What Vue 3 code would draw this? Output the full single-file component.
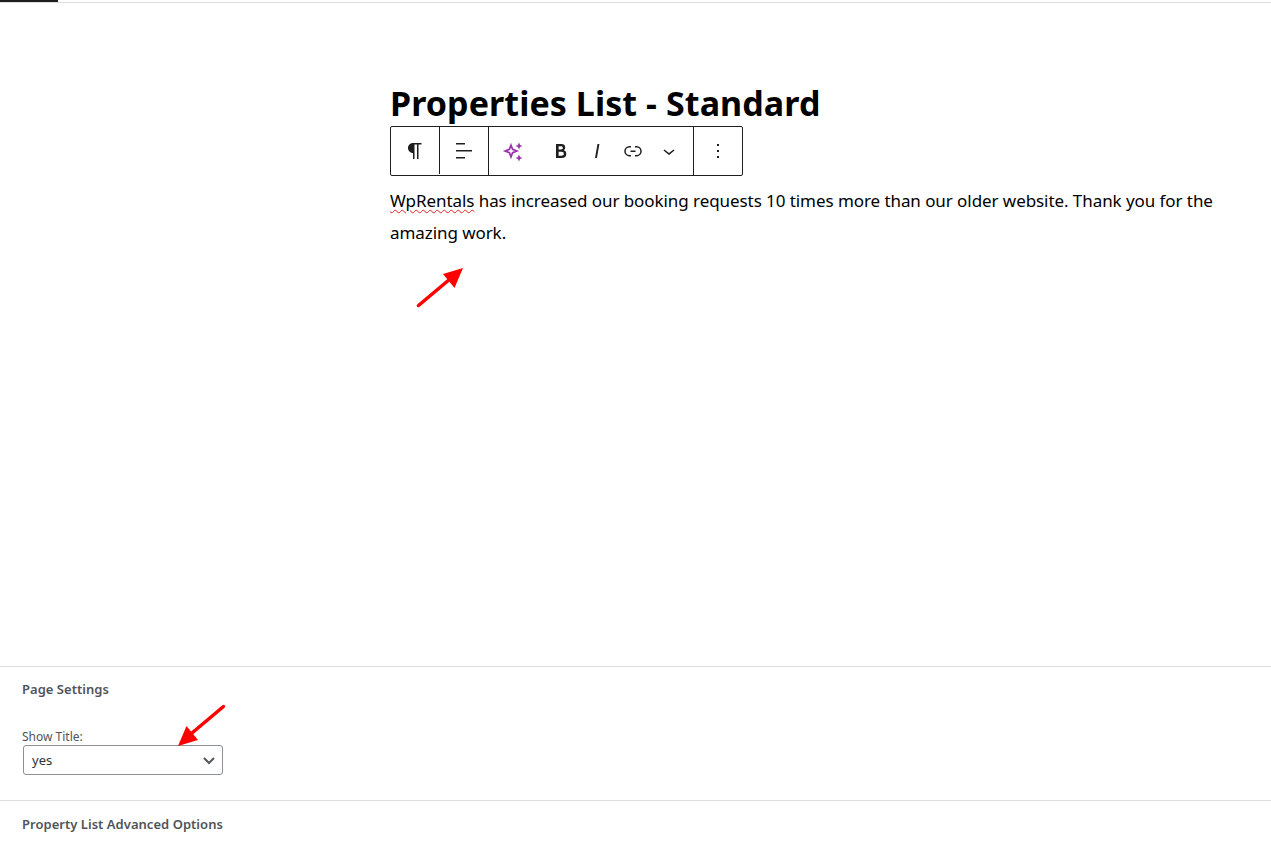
<template>
	<div class="page">
		<div class="progress"><div class="progress-done"></div></div>

		<main class="editor">
			<h1 class="title">Properties List - Standard</h1>

			<div class="toolbar">
				<div class="group">
					<button class="tool wide"><svg viewBox="0 0 24 24"><path d="m9.99609 14v-.2251l.00391.0001v6.225h1.5v-14.5h2.5v14.5h1.5v-14.5h3v-1.5h-8.50391c-2.76142 0-5 2.23858-5 5 0 2.7614 2.23858 5 5 5z" /></svg></button>
				</div>
				<div class="group">
					<button class="tool wide"><svg viewBox="0 0 24 24"><path d="M13 5.5H4V4h9v1.5Zm7 7H4V11h16v1.5Zm-7 7H4V18h9v1.5Z" /></svg></button>
				</div>
				<div class="group formats">
					<button class="tool ai"><svg viewBox="0 0 24 24"><path class="spark" d="M10 6.2 11.6 10.4 15.8 12 11.6 13.6 10 17.8 8.4 13.6 4.2 12 8.4 10.4Z" /><path class="spark-dot" d="M18 3.6 19.1 5.9 21.4 7 19.1 8.1 18 10.4 16.9 8.1 14.6 7 16.9 5.9ZM18 15.6 19.1 17.9 21.4 19 19.1 20.1 18 22.4 16.9 20.1 14.6 19 16.9 17.9Z" /></svg></button>
					<button class="tool"><svg viewBox="0 0 24 24"><path d="M14.7 11.3c1-.6 1.5-1.6 1.5-3 0-2.3-1.3-3.4-4-3.4H7v14h5.8c1.4 0 2.5-.3 3.3-1 .8-.7 1.2-1.7 1.2-2.9.1-1.9-.8-3.1-2.6-3.7zm-5.1-4h2.3c.6 0 1.1.1 1.4.4.3.3.5.7.5 1.2s-.2 1-.5 1.2c-.3.3-.8.4-1.4.4H9.6V7.3zm4.6 9c-.4.3-1 .4-1.7.4H9.6v-3.9h2.9c.7 0 1.3.2 1.7.5.4.3.6.8.6 1.5s-.2 1.2-.6 1.5z" /></svg></button>
					<button class="tool"><svg viewBox="0 0 24 24"><path d="M12.5 5L10 19h1.9l2.5-14z" /></svg></button>
					<button class="tool"><svg viewBox="0 0 24 24"><path d="M10 17.389H8.444A5.194 5.194 0 1 1 8.444 7H10v1.5H8.444a3.694 3.694 0 0 0 0 7.389H10v1.5ZM14 7h1.556a5.194 5.194 0 0 1 0 10.39H14v-1.5h1.556a3.694 3.694 0 0 0 0-7.39H14V7Zm-4.5 6h5v-1.5h-5V13Z" /></svg></button>
					<button class="tool"><svg viewBox="0 0 24 24"><path d="M17.5 11.6L12 16l-5.5-4.4.9-1.2L12 14l4.5-3.6 1 1.2z" /></svg></button>
				</div>
				<div class="group">
					<button class="tool wide"><svg viewBox="0 0 24 24"><path d="M13 19h-2v-2h2v2zm0-6h-2v-2h2v2zm0-6h-2V5h2v2z" /></svg></button>
				</div>
			</div>

			<p class="text"><span class="misspelled">WpRentals</span> has increased our booking requests 10 times more than our older website. Thank you for the amazing work.</p>
		</main>

		<section class="panel settings">
			<h2>Page Settings</h2>
			<label class="field-label" for="show-title">Show Title:</label>
			<div class="select-wrap">
				<select id="show-title" v-model="showTitle">
					<option v-for="option of options" :key="option" :value="option">{{option}}</option>
				</select>
				<svg viewBox="0 0 24 24"><path d="M7 10l5 5 5-5" /></svg>
			</div>
		</section>

		<section class="panel advanced">
			<h2>Property List Advanced Options</h2>
		</section>

		<!-- annotation arrows drawn over the screenshot -->
		<svg class="arrows" viewBox="0 0 1271 850">
			<g v-for="arrow of arrows" :key="arrow.line">
				<path class="arrow-line" :d="arrow.line" />
				<path class="arrow-head" :d="arrow.head" />
			</g>
		</svg>
	</div>
</template>

<style scoped>
	.page
	{
		position: relative;
		height: 850px;
		overflow: hidden;
		display: flex;
		flex-direction: column;
		background: #fff;
		color: #000;
		font-family: "Noto Sans", sans-serif;
	}

	.progress
	{
		height: 3px;
		flex: none;
		box-sizing: border-box;
		border-bottom: 1px solid #ddd;
	}

	.progress-done
	{
		width: 58px;
		height: 2px;
		background: #1e1e1e;
	}

	.editor
	{
		flex: 1;
		padding: 78px 0 0 390px;
	}

	.title
	{
		margin: 0;
		font-size: 34px;
		line-height: 45px;
		font-weight: 700;
		letter-spacing: 0.08px;
	}

	.toolbar
	{
		display: inline-flex;
		box-sizing: border-box;
		height: 50px;
		border: 1px solid #1e1e1e;
		border-radius: 2px;
		vertical-align: top;
	}

	.group
	{
		display: flex;
		border-left: 1px solid #1e1e1e;
	}

	.group:first-child
	{
		border-left: 0;
	}

	.group:nth-child(2)
	{
		height: 47px;
	}

	.formats
	{
		padding: 0 6px;
	}

	.tool
	{
		width: 36px;
		height: 48px;
		padding: 0;
		border: 0;
		background: none;
		display: flex;
		align-items: center;
		justify-content: center;
	}

	.tool.wide
	{
		width: 48px;
	}

	.tool.ai
	{
		margin-right: 12px;
	}

	.tool svg
	{
		width: 24px;
		height: 24px;
		margin-top: -1px;
		fill: #1e1e1e;
	}

	.spark
	{
		fill: none;
		stroke: #9b2fae;
		stroke-width: 1.7;
	}

	.spark-dot
	{
		fill: #9b2fae;
	}

	.text
	{
		margin: 9px 0 0;
		width: 840px;
		font-size: 17px;
		line-height: 32px;
		letter-spacing: -0.07px;
	}

	.misspelled
	{
		text-decoration: underline wavy #e02020 1px;
		text-underline-offset: 2px;
	}

	.panel
	{
		flex: none;
		box-sizing: border-box;
		padding: 0 22px;
		border-top: 1px solid #ddd;
	}

	.panel h2
	{
		margin: 0;
		font-size: 13px;
		line-height: 18px;
		font-weight: 600;
		letter-spacing: 0.03px;
		color: #50545a;
	}

	.settings
	{
		height: 134px;
		padding-top: 13px;
	}

	.advanced
	{
		height: 50px;
		padding-top: 14px;
	}

	.field-label
	{
		display: block;
		margin-top: 31px;
		font-size: 12px;
		line-height: 16px;
		color: #50545a;
	}

	.select-wrap
	{
		position: relative;
		width: 200px;
		height: 30px;
		margin-left: 1px;
	}

	select
	{
		appearance: none;
		width: 100%;
		height: 100%;
		box-sizing: border-box;
		padding: 0 24px 0 8px;
		border: 1px solid #8c8f94;
		border-radius: 3px;
		background: #fff;
		color: #2c3338;
		font-family: inherit;
		font-size: 13px;
	}

	.select-wrap svg
	{
		position: absolute;
		right: 2px;
		top: 3px;
		width: 24px;
		height: 24px;
		fill: none;
		stroke: #50575e;
		stroke-width: 2;
		pointer-events: none;
	}

	.arrows
	{
		position: absolute;
		left: 0;
		top: 0;
		width: 1271px;
		height: 850px;
		pointer-events: none;
	}

	.arrow-line
	{
		fill: none;
		stroke: #f00;
		stroke-width: 3.5;
		stroke-linecap: round;
	}

	.arrow-head
	{
		fill: #f00;
	}
</style>

<script setup>
	import { ref } from "vue";


	const options = ["yes", "no"];
	const showTitle = ref("yes");

	const arrows = [
		{ line: "M418.5 305.5L450 279", head: "M463 268L454.5 288 443 274Z" },
		{ line: "M223.5 706.5L192 733", head: "M178 746L186.5 726 198 740Z" },
	];
</script>
